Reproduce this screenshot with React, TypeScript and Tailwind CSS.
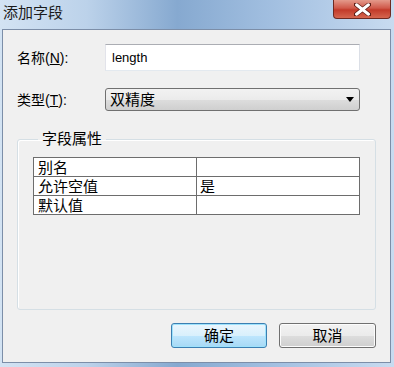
const font = "font-['Liberation_Sans','Noto_Sans_CJK_SC',sans-serif]";

const rows = [
  { name: "别名", value: "" },
  { name: "允许空值", value: "是" },
  { name: "默认值", value: "" },
];

const App = () => {
  return (
    <div
      className={`w-[394px] h-[367px] flex flex-col bg-[linear-gradient(90deg,#d3e3f3_0%,#bcd2ea_22%,#86a9d0_45%,#a3c0e1_70%,#c8dbf0_100%)] text-black ${font}`}
    >
      {/* Title bar */}
      <div className="h-[29px] flex items-start justify-between shrink-0">
        <span className="pl-[3px] pt-[3px] text-[15px] leading-[20px] text-[#1a1a1a]">添加字段</span>
        <div className="mr-[3px] w-[58px] h-[19px] rounded-b-[4px] border border-t-0 border-[#6e2a22] bg-[linear-gradient(180deg,#e49a8b_0%,#d0594a_45%,#c23a2a_55%,#d5664f_100%)] flex items-center justify-center">
          <svg width="17" height="13" viewBox="0 0 17 13">
            <path
              d="M2 1.5 L15 11.5 M15 1.5 L2 11.5"
              stroke="#5b1b14"
              strokeWidth="4.5"
              strokeLinecap="round"
            />
            <path
              d="M2.5 1.8 L14.5 11.2 M14.5 1.8 L2.5 11.2"
              stroke="#ffffff"
              strokeWidth="3"
              strokeLinecap="round"
            />
          </svg>
        </div>
      </div>

      {/* Client area */}
      <div className="mx-[2px] mr-[3px] h-[334px] border border-[#7c8ea8] bg-[#f0f0f0] flex flex-col">
        {/* Name row */}
        <div className="flex items-center mt-[14px] pl-[14px]">
          <span className="w-[88px] text-[14px] leading-[16px]">
            名称(<span className="underline">N</span>):
          </span>
          <div className="w-[255px] h-[27px] border border-[#abadb3] border-l-[#e2e3ea] border-b-[#e3e9ef] border-r-[#dbdfe6] bg-white pl-[6px] flex items-center text-[13px]">
            length
          </div>
        </div>

        {/* Type row */}
        <div className="flex items-center mt-[17px] pl-[14px]">
          <span className="w-[88px] text-[14px] leading-[16px]">
            类型(<span className="underline">T</span>):
          </span>
          <div className="w-[255px] h-[23px] rounded-[3px] border border-[#707070] bg-[linear-gradient(180deg,#f2f2f2_0%,#ebebeb_50%,#dddddd_51%,#cfcfcf_100%)] flex items-center justify-between pl-[4px] pr-[5px]">
            <span className="text-[15px] leading-[18px]">双精度</span>
            <svg width="8" height="5" viewBox="0 0 8 5">
              <path d="M0 0 H8 L4 5 Z" fill="#000" />
            </svg>
          </div>
        </div>

        {/* Group box */}
        <fieldset className="ml-[14px] mt-[19px] w-[359px] h-[180px] border border-[#d5dfe5] rounded-[3px] shadow-[inset_1px_1px_0_#fff] px-[15px]">
          <legend className="ml-[5px] px-[4px] text-[15px] leading-[18px]">字段属性</legend>
          <table className="mt-[9px] w-[327px] border-collapse bg-white">
            <tbody>
              {rows.map((r) => (
                <tr key={r.name} className="h-[19px]">
                  <td className="w-[163px] border border-[#6d6d6d] pl-[4px] text-[15px] leading-[17px] p-0">
                    {r.name}
                  </td>
                  <td className="border border-[#6d6d6d] pl-[3px] text-[15px] leading-[17px] p-0">
                    {r.value}
                  </td>
                </tr>
              ))}
            </tbody>
          </table>
        </fieldset>

        {/* Buttons */}
        <div className="flex justify-end gap-[12px] mt-[13px] pr-[14px]">
          <button className="w-[96px] h-[25px] rounded-[3px] border border-[#3c7fb1] bg-[linear-gradient(180deg,#eaf6fd_0%,#d9f0fc_50%,#bee6fd_51%,#a7d9f5_100%)] shadow-[inset_0_0_0_1px_#9ee2fc] text-[15px] leading-[18px]">
            确定
          </button>
          <button className="w-[97px] h-[25px] rounded-[3px] border border-[#707070] bg-[linear-gradient(180deg,#f2f2f2_0%,#ebebeb_50%,#dddddd_51%,#cfcfcf_100%)] shadow-[inset_0_0_0_1px_#fcfcfc] text-[15px] leading-[18px]">
            取消
          </button>
        </div>
      </div>
    </div>
  );
};

export default App;
